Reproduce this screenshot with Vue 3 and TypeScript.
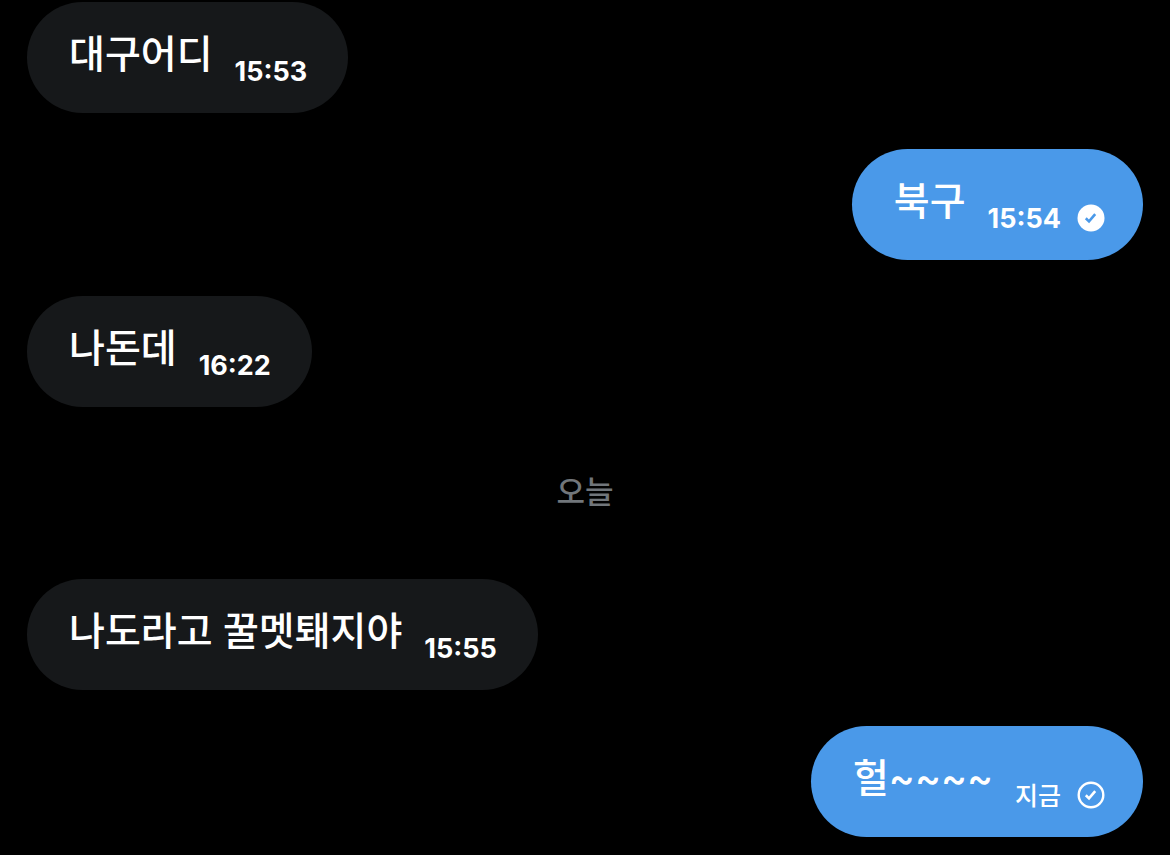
<script setup lang="ts">
interface Message {
  id: number
  text: string
  time: string
  mine: boolean
  status?: 'read' | 'sent'
}
interface Group {
  label?: string
  messages: Message[]
}

const groups: Group[] = [
  {
    messages: [
      { id: 1, text: '대구어디', time: '15:53', mine: false },
      { id: 2, text: '북구', time: '15:54', mine: true, status: 'read' },
      { id: 3, text: '나돈데', time: '16:22', mine: false },
    ],
  },
  {
    label: '오늘',
    messages: [
      { id: 4, text: '나도라고 꿀멧퇘지야', time: '15:55', mine: false },
      { id: 5, text: '헐~~~~', time: '지금', mine: true, status: 'sent' },
    ],
  },
]
</script>

<template>
  <main class="chat">
    <section v-for="(group, i) in groups" :key="i" class="group">
      <h2 v-if="group.label" class="day">{{ group.label }}</h2>
      <article v-for="m in group.messages" :key="m.id" class="bubble" :class="{ mine: m.mine }">
        <p class="text">{{ m.text }}</p>
        <span class="time" :class="{ word: m.time === '지금' }">{{ m.time }}</span>
        <svg v-if="m.status === 'read'" class="status" viewBox="0 0 28 28" role="img" aria-label="읽음">
          <circle cx="14" cy="14" r="13.5" fill="#fff" />
          <path d="M8.8 14.3l3.2 3.1 6.2-7.2" fill="none" stroke="#4a99e9" stroke-width="2.6" />
        </svg>
        <svg v-else-if="m.status === 'sent'" class="status" viewBox="0 0 28 28" role="img" aria-label="전송됨">
          <circle cx="14" cy="14" r="12.3" fill="none" stroke="#fff" stroke-width="2.4" />
          <path d="M8.8 14.3l3.2 3.1 6.2-7.2" fill="none" stroke="#fff" stroke-width="2.6" />
        </svg>
      </article>
    </section>
  </main>
</template>

<style>
body {
  background: #000;
}
</style>

<style scoped>
.chat {
  padding: 2px 27px 18px;
  color: #fff;
  font-family: Inter, "Noto Sans CJK KR", sans-serif;
}
.group,
.chat {
  display: flex;
  flex-direction: column;
}
.group {
  gap: 36px;
}
.bubble {
  display: flex;
  align-items: flex-end;
  align-self: flex-start;
  box-sizing: border-box;
  min-height: 111px;
  padding: 22px 41px 26px 42px;
  border-radius: 56px;
  background: #16181a;
}
.mine {
  align-self: flex-end;
  padding-right: 38px;
  background: #4a99e9;
}
.text {
  margin: 0 22px 0 0;
  align-self: flex-start;
  font-size: 39px;
  line-height: 60px;
  font-weight: 500;
}
.time {
  font-size: 27px;
  line-height: 30px;
  font-weight: 700;
}
.word {
  font-size: 25px;
  font-weight: 500;
}
.status {
  width: 28px;
  height: 28px;
  margin: 0 0 2px 16px;
}
.day {
  margin: 65px 0 31px;
  color: #71767b;
  font-size: 31px;
  line-height: 40px;
  font-weight: 500;
  text-align: center;
}
</style>
